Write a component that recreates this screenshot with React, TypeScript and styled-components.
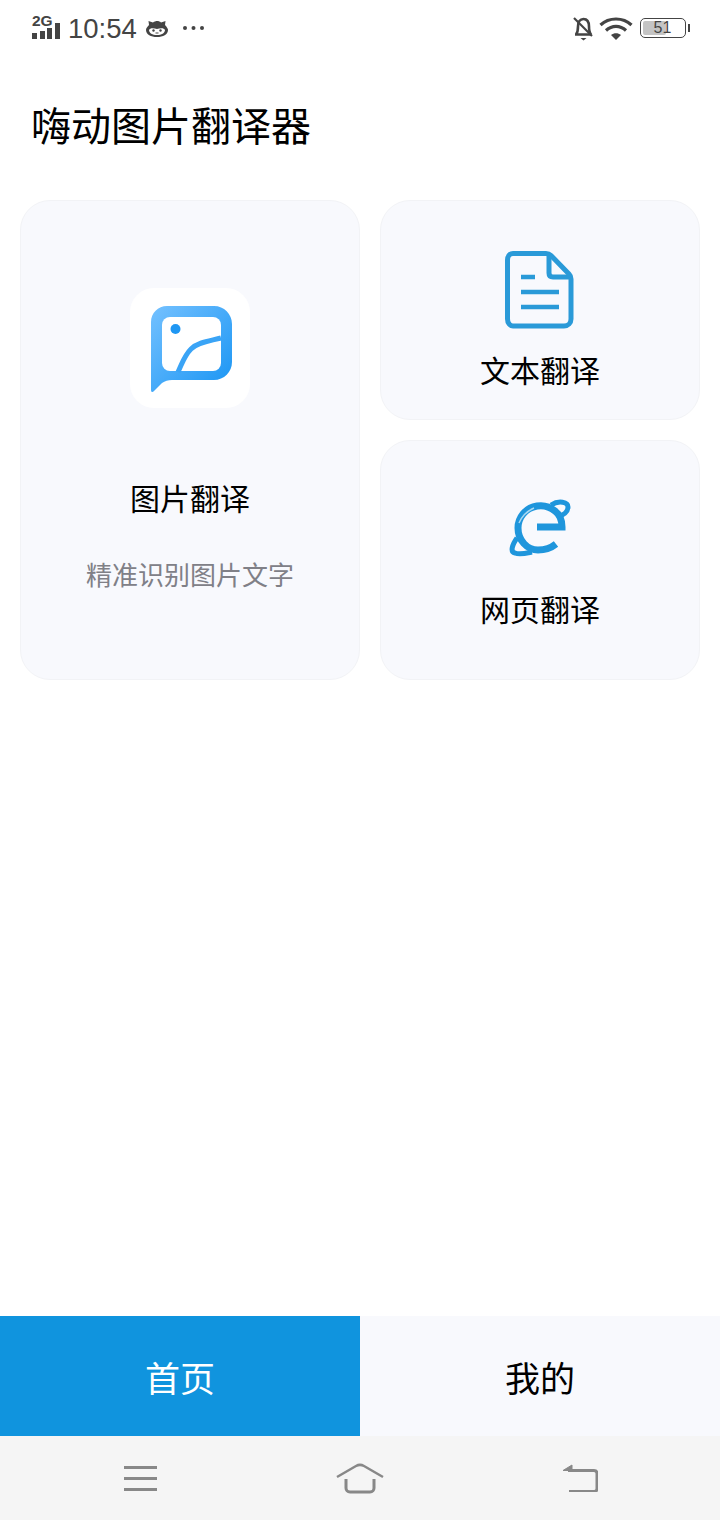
import React, {ReactElement} from "react";
import styled, {createGlobalStyle} from "styled-components";

const GlobalStyle = createGlobalStyle`
  html, body {
    margin: 0;
    padding: 0;
    background: #ffffff;
  }
  * {
    box-sizing: border-box;
  }
`;

const cjk = `"Noto Sans CJK SC", "Noto Sans", sans-serif`;

const Page = styled.div`
  width: 720px;
  height: 1520px;
  display: flex;
  flex-direction: column;
  font-family: ${cjk};
  color: #000000;
`;

const StatusBar = styled.div`
  height: 56px;
  padding: 0 31px 0 32px;
  display: flex;
  align-items: center;
  justify-content: space-between;
  color: #444444;
`;

const StatusGroup = styled.div`
  display: flex;
  align-items: center;
`;

const SignalWrap = styled.div`
  width: 28px;
  height: 24px;
  margin-bottom: 2px;
  display: flex;
  flex-direction: column;
`;

const SignalLabel = styled.span`
  font-family: "Liberation Sans", sans-serif;
  font-size: 15.5px;
  font-weight: 700;
  line-height: 12px;
`;

const SignalBars = styled.div`
  margin-top: -4px;
  display: flex;
  align-items: flex-end;
  justify-content: space-between;
  height: 16px;
`;

const SignalBar = styled.i<{$h: number}>`
  width: 5px;
  height: ${p => p.$h}px;
  background: #444444;
`;

const Time = styled.span`
  margin-left: 8px;
  margin-top: 1px;
  font-family: "Liberation Sans", sans-serif;
  font-size: 27.5px;
  line-height: 32px;
`;

const Face = styled.svg`
  margin-left: 9px;
`;

const Dots = styled.svg`
  margin-left: 14px;
`;

const Battery = styled.div`
  position: relative;
  width: 46px;
  height: 20px;
  margin-left: 7px;
  border: 1.5px solid #444444;
  border-radius: 5px;
  display: flex;
  align-items: center;
  justify-content: center;
  font-family: "Liberation Sans", sans-serif;
  font-size: 16px;

  &::before {
    content: "";
    position: absolute;
    left: 2px;
    top: 2px;
    bottom: 2px;
    width: 23px;
    background: #c4c4c4;
    border-radius: 2px;
  }

  &::after {
    content: "";
    position: absolute;
    right: -5px;
    top: 4.5px;
    width: 2px;
    height: 8px;
    background: #444444;
  }
`;

const BatteryValue = styled.span`
  position: relative;
  line-height: 16px;
  margin-right: 1px;
`;

const Title = styled.h1`
  margin: 0;
  height: 144px;
  padding: 0 0 8px 31px;
  display: flex;
  align-items: center;
  font-size: 40px;
  font-weight: 400;
`;

const Grid = styled.div`
  padding: 0 20px;
  display: grid;
  grid-template-columns: 340px 320px;
  grid-template-rows: 220px 240px;
  gap: 20px;
`;

const Card = styled.div<{$tall?: boolean}>`
  grid-row: ${p => (p.$tall ? "1 / span 2" : "auto")};
  padding-top: ${p => (p.$tall ? "87px" : "0")};
  background: #f8f9fd;
  border: 1px solid #f2f3f6;
  border-radius: 30px;
  display: flex;
  flex-direction: column;
  align-items: center;
`;

const LogoTile = styled.div`
  width: 120px;
  height: 120px;
  background: #ffffff;
  border-radius: 24px;
`;

const CardTitle = styled.div<{$top: number}>`
  margin-top: ${p => p.$top}px;
  font-size: 30px;
  line-height: 42px;
`;

const CardHint = styled.div`
  margin-top: 37px;
  font-size: 26px;
  line-height: 38px;
  color: #808087;
`;

const DocIcon = styled.svg`
  margin-top: 49px;
`;

const EdgeIcon = styled.svg`
  margin-top: 55px;
`;

const Spacer = styled.div`
  flex: 1;
`;

const Tabs = styled.div`
  height: 120px;
  display: flex;
`;

const Tab = styled.div<{$active?: boolean}>`
  width: 360px;
  display: flex;
  align-items: center;
  justify-content: center;
  font-size: 35px;
  background: ${p => (p.$active ? "#1094de" : "#f8f9fd")};
  color: ${p => (p.$active ? "#ffffff" : "#000000")};
`;

const NavBar = styled.div`
  height: 84px;
  padding: 0 122px;
  background: #f5f5f5;
  display: flex;
  align-items: center;
  justify-content: space-between;
`;

function LogoGlyph(): ReactElement {
  return (
    <svg width="120" height="120" viewBox="0 0 120 120">
      <defs>
        <linearGradient id="logoFill" x1="0" y1="0" x2="1" y2="1">
          <stop offset="0" stopColor="#74c1ff" />
          <stop offset="1" stopColor="#1894f3" />
        </linearGradient>
      </defs>
      <path
        d="M37 18H84C94 18 102 26 102 36V74C102 84 94 92 84 92H42C38 92 35 93 32 95L24 103C22.5 105 21 104 21 102V34C21 25 28 18 37 18Z"
        fill="url(#logoFill)"
      />
      <rect x="32" y="29" width="59" height="54" rx="8" fill="#ffffff" />
      <circle cx="45.5" cy="41" r="5" fill="#1f97f3" />
      <path
        d="M48 84C52 76 54 68 61 61C68 54 80 53 91 50"
        fill="none"
        stroke="#3aa4f6"
        strokeWidth="5"
      />
    </svg>
  );
}

function EdgeGlyph(): ReactElement {
  return (
    <EdgeIcon width="66" height="66" viewBox="12 6 66 66">
      <path
        d="M42 37H67C67 30 64 24 60 21C54 16 48 15 42 16C30 18 23 28 23 38C23 50 32 60 43 60C50 60 56 58 61 54"
        fill="none"
        stroke="#1f96dc"
        strokeWidth="7"
      />
      <path
        d="M56 15C64 10 73 12 73 17C73 22 68 25 64 26M22 48C17 55 15 62 20 63C25 65 32 63 37 62"
        fill="none"
        stroke="#1f96dc"
        strokeWidth="5"
      />
      <path d="M24 33C27 26 32 21 39 18" fill="none" stroke="#a9d8f2" strokeWidth="1.5" />
    </EdgeIcon>
  );
}

export default function App(): ReactElement {
  return (
    <Page>
      <GlobalStyle />
      <StatusBar>
        <StatusGroup>
          <SignalWrap>
            <SignalLabel>2G</SignalLabel>
            <SignalBars>
              <SignalBar $h={6} />
              <SignalBar $h={8} />
              <SignalBar $h={11} />
              <SignalBar $h={16} />
            </SignalBars>
          </SignalWrap>
          <Time>10:54</Time>
          <Face width="22" height="18" viewBox="0 0 22 18">
            <path d="M3 6L2.5 2L7 3.5C9.5 1.5 13 1.5 15 3.5L19.5 2L19 6C21 8 22 10 22 11C22 15.5 17 18 11 18C5 18 0 15.5 0 11C0 9.5 1 8 3 6Z" fill="#444444" />
            <path d="M3 11C4 8.5 8 9 11 10C14 9 18 8.5 19 11C19 14 15.5 16 11 16C6.5 16 3 14 3 11Z" fill="#ffffff" />
            <circle cx="7.5" cy="11.5" r="1.2" fill="#444444" />
            <circle cx="14.5" cy="11.5" r="1.2" fill="#444444" />
            <path d="M9.5 14H12.5" stroke="#444444" strokeWidth="1" />
          </Face>
          <Dots width="23" height="6" viewBox="0 0 23 6">
            <circle cx="3" cy="3" r="2" fill="#444444" />
            <circle cx="11.5" cy="3" r="2" fill="#444444" />
            <circle cx="20" cy="3" r="2" fill="#444444" />
          </Dots>
        </StatusGroup>
        <StatusGroup>
          <svg width="22" height="26" viewBox="0 0 22 26">
            <path
              d="M3 19.5H19.5M4 19.5C6 17 6 15 6 11.5C6 7 8 4 11.5 4C15 4 17 7 17 11.5C17 15 17 17 19 19.5"
              fill="none"
              stroke="#444444"
              strokeWidth="2.6"
            />
            <path d="M2 3L20 21" stroke="#444444" strokeWidth="2.2" />
            <path d="M8.5 23H14.5L11.5 25.5Z" fill="#444444" />
          </svg>
          <svg width="34" height="26" viewBox="0 0 34 26" style={{marginLeft: 5}}>
            <path d="M1.5 10C10 2 24 2 32.5 10" fill="none" stroke="#444444" strokeWidth="3.2" />
            <path d="M7 15.5C13 10 21 10 27 15.5" fill="none" stroke="#444444" strokeWidth="3.2" />
            <path d="M12 20C15 17.6 19 17.6 22 20L17 25Z" fill="#444444" />
          </svg>
          <Battery>
            <BatteryValue>51</BatteryValue>
          </Battery>
          <svg width="3" height="1" />
        </StatusGroup>
      </StatusBar>

      <Title>嗨动图片翻译器</Title>

      <Grid>
        <Card $tall>
          <LogoTile>
            <LogoGlyph />
          </LogoTile>
          <CardTitle $top={68}>图片翻译</CardTitle>
          <CardHint>精准识别图片文字</CardHint>
        </Card>
        <Card>
          <DocIcon width="70" height="80" viewBox="15 10 70 80">
            <path
              d="M23 13.5H56C58 13.5 59.5 14 61 15.5L79 34C80.5 35.5 81 37 81 39V79C81 83 78 86 74 86H23C20 86 17.5 83 17.5 79V20C17.5 16 20 13.5 23 13.5Z"
              fill="none"
              stroke="#2a9ad8"
              strokeWidth="5"
            />
            <path d="M59 13.5V33C59 35.5 60.5 37 63 37H81" fill="none" stroke="#2a9ad8" strokeWidth="5" />
            <path d="M31 37H45M31 52H69M31 67H69" fill="none" stroke="#2a9ad8" strokeWidth="4.5" />
          </DocIcon>
          <CardTitle $top={18}>文本翻译</CardTitle>
        </Card>
        <Card>
          <EdgeGlyph />
          <CardTitle $top={25}>网页翻译</CardTitle>
        </Card>
      </Grid>

      <Spacer />

      <Tabs>
        <Tab $active>首页</Tab>
        <Tab>我的</Tab>
      </Tabs>

      <NavBar>
        <svg width="36" height="28" viewBox="0 0 36 28">
          <path d="M2 3.5H35M2 14.5H35M2 25.5H35" stroke="#888888" strokeWidth="3" />
        </svg>
        <svg width="50" height="32" viewBox="0 0 50 32">
          <path d="M2 15L21 4C23.5 2.6 26.5 2.6 29 4L48 15" fill="none" stroke="#888888" strokeWidth="2.5" />
          <path d="M11 17V26C11 28 12.5 30 15 30H35C37.5 30 39 28 39 26V17" fill="none" stroke="#888888" strokeWidth="3" />
        </svg>
        <svg width="36" height="28" viewBox="0 0 36 28">
          <path d="M1 6.5L10 1V6.5Z" fill="#888888" stroke="#888888" strokeWidth="1" />
          <path d="M6 6.5H32C34 6.5 35 7.5 35 9.5V24.5C35 26.5 34 27.5 32 27.5H7" fill="none" stroke="#888888" strokeWidth="3" />
        </svg>
      </NavBar>
    </Page>
  );
}
